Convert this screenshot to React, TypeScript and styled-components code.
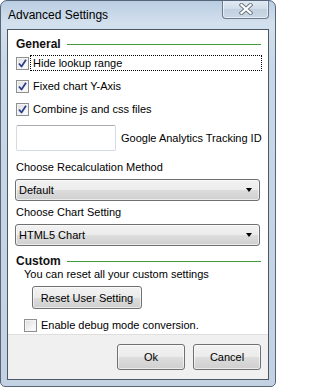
import styled, { createGlobalStyle } from "styled-components";

const GlobalStyle = createGlobalStyle`
  html, body {
    margin: 0;
    padding: 0;
    background: #ffffff;
  }
  * {
    box-sizing: border-box;
  }
`;

const CheckMark = () => (
  <svg width="9" height="9" viewBox="0 0 9 9">
    <path d="M1 4.5 L3.5 7.5 L8 0.8" fill="none" stroke="#2c3f8a" strokeWidth="1.8" strokeLinejoin="round" />
  </svg>
);

const CheckBox = ({ checked }: { checked: boolean }) => (
  <Box>{checked && <CheckMark />}</Box>
);

const App = () => {
  return (
    <>
      <GlobalStyle />
      <Window>
        <TitleBar>
          <Title>Advanced Settings</Title>
          <CloseButton>
            <svg width="14" height="12" viewBox="0 0 14 12">
              <path d="M2.5 2 L11.5 10 M11.5 2 L2.5 10" stroke="#6f7a87" strokeWidth="4.2" strokeLinecap="square" />
              <path d="M2.5 2 L11.5 10 M11.5 2 L2.5 10" stroke="#ffffff" strokeWidth="2.2" strokeLinecap="square" />
            </svg>
          </CloseButton>
        </TitleBar>

        <Client>
          <Content>
            <GroupHeading $top={7}>
              <HeadingText>General</HeadingText>
              <HeadingLine />
            </GroupHeading>

            <CheckRow $top={4}>
              <CheckBox checked />
              <CheckLabel $focused>Hide lookup range</CheckLabel>
            </CheckRow>
            <CheckRow $top={7}>
              <CheckBox checked />
              <CheckLabel>Fixed chart Y-Axis</CheckLabel>
            </CheckRow>
            <CheckRow $top={7}>
              <CheckBox checked />
              <CheckLabel>Combine js and css files</CheckLabel>
            </CheckRow>

            <InputRow>
              <TextInput />
              <Label>Google Analytics Tracking ID</Label>
            </InputRow>

            <FieldLabel $top={10}>Choose Recalculation Method</FieldLabel>
            <Select>
              <span>Default</span>
              <Arrow />
            </Select>

            <FieldLabel $top={5}>Choose Chart Setting</FieldLabel>
            <Select>
              <span>HTML5 Chart</span>
              <Arrow />
            </Select>

            <GroupHeading $top={8}>
              <HeadingText>Custom</HeadingText>
              <HeadingLine />
            </GroupHeading>
            <Note>You can reset all your custom settings</Note>
            <ResetButton>Reset User Setting</ResetButton>

            <DebugRow>
              <CheckBox checked={false} />
              <Label>Enable debug mode conversion.</Label>
            </DebugRow>
          </Content>

          <Footer>
            <DialogButton>Ok</DialogButton>
            <DialogButton>Cancel</DialogButton>
          </Footer>
        </Client>
      </Window>
    </>
  );
};

const Window = styled.div`
  width: 276px;
  height: 387px;
  display: flex;
  flex-direction: column;
  border: 1px solid #56657a;
  border-radius: 7px 7px 5px 5px;
  background: linear-gradient(180deg, #b9cde2 0%, #d3e0ed 22px, #c9d8e7 60px, #c3d2e2 100%);
  font-family: "Liberation Sans", Arial, sans-serif;
  font-size: 11px;
  color: #000000;
  overflow: hidden;
`;

const TitleBar = styled.div`
  height: 28px;
  display: flex;
  align-items: flex-start;
  justify-content: space-between;
  padding: 0 6px 0 7px;
`;

const Title = styled.div`
  font-size: 12px;
  line-height: 28px;
  color: #000000;
`;

const CloseButton = styled.div`
  width: 47px;
  height: 19px;
  margin-top: -1px;
  display: flex;
  align-items: center;
  justify-content: center;
  border: 1px solid #6b7a8e;
  border-top: none;
  border-radius: 0 0 4px 4px;
  background: linear-gradient(180deg, #e2ebf4 0%, #d0dde9 50%, #c1d0df 51%, #cad8e6 100%);
  box-shadow: inset 0 0 0 1px rgba(255, 255, 255, 0.55);
`;

const Client = styled.div`
  margin: 0 6px 6px 6px;
  flex: 1;
  display: flex;
  flex-direction: column;
  border: 1px solid #4c5766;
  background: #f0f0f0;
`;

const Content = styled.div`
  height: 305px;
  display: flex;
  flex-direction: column;
  align-items: flex-start;
  padding: 0 6px 0 8px;
  background: #ffffff;
  border-bottom: 1px solid #dfdfdf;
`;

const GroupHeading = styled.div<{ $top: number }>`
  width: 100%;
  height: 14px;
  margin-top: ${(p) => p.$top}px;
  display: flex;
  align-items: center;
  gap: 6px;
`;

const HeadingText = styled.div`
  font-size: 12px;
  font-weight: bold;
  color: #111111;
  line-height: 14px;
`;

const HeadingLine = styled.div`
  flex: 1;
  height: 1px;
  margin-right: 1px;
  background: #3f9a3a;
`;

const CheckRow = styled.div<{ $top: number }>`
  width: 100%;
  height: 16px;
  margin-top: ${(p) => p.$top}px;
  display: flex;
  align-items: center;
  gap: 1px;
`;

const Box = styled.div`
  width: 13px;
  height: 13px;
  flex: none;
  display: flex;
  align-items: center;
  justify-content: center;
  border: 1px solid #8e8f8f;
  background: linear-gradient(135deg, #dcdcdc 0%, #f4f4f4 60%, #ffffff 100%);
  box-shadow: inset 0 0 0 1px #f4f4f4;
`;

const CheckLabel = styled.div<{ $focused?: boolean }>`
  flex: 1;
  height: 16px;
  line-height: 14px;
  padding-left: 2px;
  border: 1px dotted ${(p) => (p.$focused ? "#000000" : "transparent")};
  white-space: nowrap;
`;

const Label = styled.div`
  white-space: nowrap;
  line-height: 13px;
`;

const InputRow = styled.div`
  margin-top: 8px;
  display: flex;
  align-items: center;
  gap: 5px;
`;

const TextInput = styled.div`
  width: 100px;
  height: 26px;
  border: 1px solid #d5dbe3;
  border-top-color: #abadb3;
  border-radius: 2px;
  background: #ffffff;
`;

const FieldLabel = styled.div<{ $top: number }>`
  margin-top: ${(p) => p.$top}px;
  line-height: 13px;
  white-space: nowrap;
`;

const Select = styled.div`
  width: 245px;
  height: 22px;
  margin: 5px 0 0 -1px;
  display: flex;
  align-items: center;
  justify-content: space-between;
  padding: 0 7px 0 3px;
  border: 1px solid #707070;
  border-radius: 3px;
  background: linear-gradient(180deg, #f2f2f2 0%, #ebebeb 50%, #dddddd 51%, #cfcfcf 100%);
  box-shadow: inset 0 0 0 1px rgba(255, 255, 255, 0.6);
`;

const Arrow = styled.div`
  width: 0;
  height: 0;
  border-left: 3px solid transparent;
  border-right: 3px solid transparent;
  border-top: 4px solid #000000;
`;

const Note = styled.div`
  margin-left: 8px;
  line-height: 13px;
  white-space: nowrap;
`;

const ButtonBase = styled.div`
  display: flex;
  align-items: center;
  justify-content: center;
  border: 1px solid #707070;
  border-radius: 3px;
  background: linear-gradient(180deg, #f2f2f2 0%, #ebebeb 50%, #dddddd 51%, #cfcfcf 100%);
  box-shadow: inset 0 0 0 1px rgba(255, 255, 255, 0.6);
  white-space: nowrap;
`;

const ResetButton = styled(ButtonBase)`
  width: 110px;
  height: 23px;
  margin: 5px 0 0 16px;
`;

const DebugRow = styled.div`
  margin: 10px 0 0 8px;
  height: 13px;
  display: flex;
  align-items: center;
  gap: 4px;
`;

const Footer = styled.div`
  flex: 1;
  display: flex;
  align-items: flex-start;
  justify-content: flex-end;
  gap: 8px;
  padding: 9px 7px 0 0;
`;

const DialogButton = styled(ButtonBase)`
  width: 68px;
  height: 26px;
`;

export default App;
